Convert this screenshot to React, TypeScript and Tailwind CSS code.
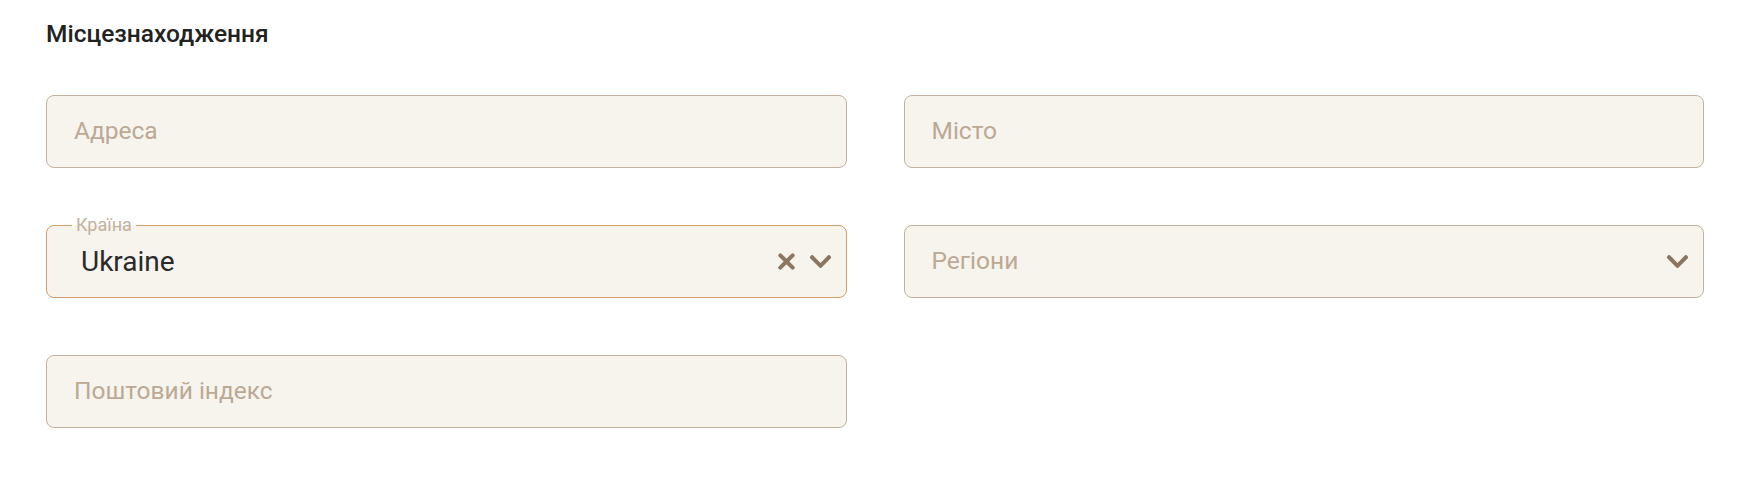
import { FaChevronDown } from "react-icons/fa";

type FieldProps = {
  placeholder: string;
  select?: boolean;
};

function Field({ placeholder, select }: FieldProps) {
  return (
    <div className="flex h-[73px] items-center rounded-[8px] border border-[#c2b29f] bg-[#f7f4ee] pl-[27px] pr-[13px]">
      <span className="flex-1 text-[24.5px] text-[#bba995]">{placeholder}</span>
      {select && <FaChevronDown className="h-[25px] w-[25px] text-[#8c7660]" />}
    </div>
  );
}

function ClearIcon() {
  return (
    <svg viewBox="0 0 20 20" className="mr-[12px] h-[19px] w-[19px]">
      <path
        d="M3.5 3.5 L16.5 16.5 M16.5 3.5 L3.5 16.5"
        stroke="#8c7660"
        strokeWidth="4.2"
        strokeLinecap="round"
        fill="none"
      />
    </svg>
  );
}

function CountryField() {
  return (
    <div className="relative flex h-[73px] items-center rounded-[8px] border border-[#d19f68] bg-[#f7f4ee] pl-[34px] pr-[13px]">
      <span className="absolute left-[25px] top-[-13px] bg-[linear-gradient(to_bottom,#ffffff_50%,#f7f4ee_50%)] px-[4px] text-[18px] leading-[24px] text-[#c3b1a0]">
        Країна
      </span>
      <span className="flex-1 text-[28px] text-[#2a2a2a]">Ukraine</span>
      <ClearIcon />
      <FaChevronDown className="h-[25px] w-[25px] text-[#8c7660]" />
    </div>
  );
}

export default function App() {
  return (
    <div className="min-h-[487px] bg-white pl-[46px] pr-[48px] pt-[19px] font-['Roboto',sans-serif]">
      <h2 className="mb-[47px] text-[24.5px] font-medium leading-[29px] text-[#222222]">
        Місцезнаходження
      </h2>
      <div className="grid grid-cols-2 gap-x-[57px] gap-y-[57px]">
        <Field placeholder="Адреса" />
        <Field placeholder="Місто" />
        <CountryField />
        <Field placeholder="Регіони" select />
        <Field placeholder="Поштовий індекс" />
      </div>
    </div>
  );
}
